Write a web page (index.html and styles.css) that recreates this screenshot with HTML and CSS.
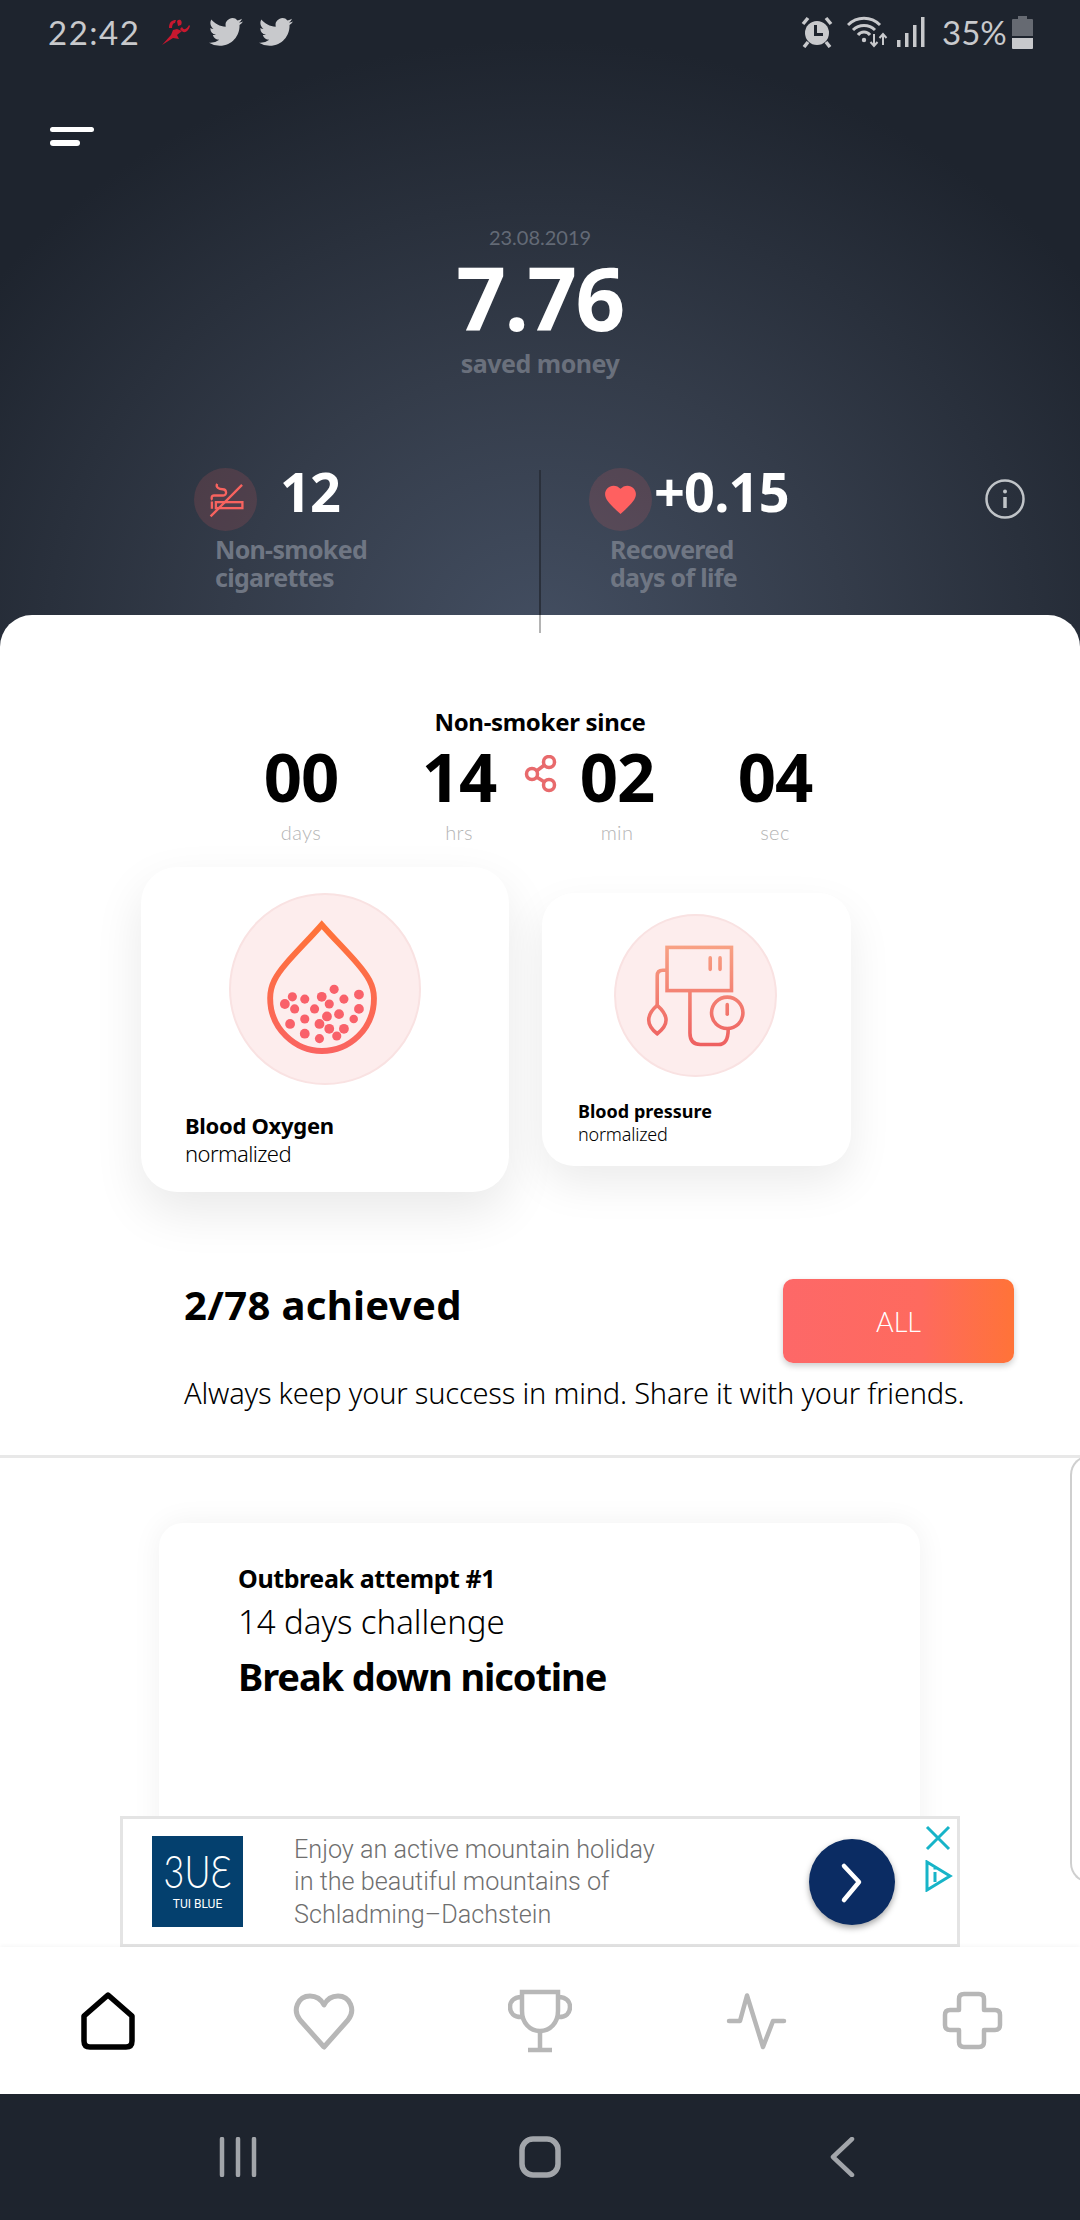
FILE: index.html
```html
<!DOCTYPE html>
<html lang="en"><head>
	<meta charset="UTF-8">
	<title>Non-smoker</title>
	<link rel="stylesheet" href="styles.css">
</head>
<body>
	<div class="main">
		<div class="hero">
			<div class="status-bar">
				<div class="status-group">
					<span class="status-time">22:42</span>
					<svg class="status-runner" viewBox="0 0 28 28" fill="#c8182f">
						<path d="M0 27 L9 17 L11 12 L15 11 L20 13 L15 17 L17 21 L11 20 Z"/>
						<path d="M7 10 C7 4 10 2 14 2 L13 5 C11 5 10 7 10 10 Z"/>
						<path d="M15 3 C18 0 21 3 19 7 L16 8 Z"/>
						<path d="M20 9 C22 13 25 11 27 7 L28 8 C26 15 21 16 18 11 Z"/>
					</svg>
					<svg class="status-bird" viewBox="0 0 24 24"><path d="M23.953 4.57a10 10 0 01-2.825.775 4.958 4.958 0 002.163-2.723c-.951.555-2.005.959-3.127 1.184a4.92 4.92 0 00-8.384 4.482C7.69 8.095 4.067 6.13 1.64 3.162a4.822 4.822 0 00-.666 2.475c0 1.71.87 3.213 2.188 4.096a4.904 4.904 0 01-2.228-.616v.06a4.923 4.923 0 003.946 4.827 4.996 4.996 0 01-2.212.085 4.936 4.936 0 004.604 3.417 9.867 9.867 0 01-6.102 2.105c-.39 0-.779-.023-1.17-.067a13.995 13.995 0 007.557 2.209c9.053 0 13.998-7.496 13.998-13.985 0-.21 0-.42-.015-.63A9.935 9.935 0 0024 4.59z"/></svg>
					<svg class="status-bird" viewBox="0 0 24 24"><path d="M23.953 4.57a10 10 0 01-2.825.775 4.958 4.958 0 002.163-2.723c-.951.555-2.005.959-3.127 1.184a4.92 4.92 0 00-8.384 4.482C7.69 8.095 4.067 6.13 1.64 3.162a4.822 4.822 0 00-.666 2.475c0 1.71.87 3.213 2.188 4.096a4.904 4.904 0 01-2.228-.616v.06a4.923 4.923 0 003.946 4.827 4.996 4.996 0 01-2.212.085 4.936 4.936 0 004.604 3.417 9.867 9.867 0 01-6.102 2.105c-.39 0-.779-.023-1.17-.067a13.995 13.995 0 007.557 2.209c9.053 0 13.998-7.496 13.998-13.985 0-.21 0-.42-.015-.63A9.935 9.935 0 0024 4.59z"/></svg>
				</div>
				<div class="status-group status-right">
					<svg class="status-alarm" viewBox="0 0 32 32">
						<circle cx="16" cy="17" r="12" fill="#c8c9cc"/>
						<path d="M14.5 9 V18.5 H22" fill="none" stroke="#1e242e" stroke-width="3"/>
						<path d="M2 8 L7 2 M30 8 L25 2 M7 26 L3 31 M25 26 L29 31" stroke="#c8c9cc" stroke-width="3.5" fill="none"/>
					</svg>
					<svg class="status-wifi" viewBox="0 0 41 32" fill="none" stroke="#c8c9cc">
						<path d="M1 9 C10 0 24 0 33 9" stroke-width="3"/>
						<path d="M6 14 C12 8 22 8 28 14" stroke-width="3"/>
						<path d="M11 19 C14 15 20 15 23 19" stroke-width="3"/>
						<circle cx="17" cy="24" r="2.2" fill="#c8c9cc" stroke="none"/>
						<path d="M27 18 V30 M23.5 26 L27 30 L30.5 26 M36 29 V19 M32.5 22 L36 18 L39.5 22" stroke-width="2"/>
					</svg>
					<svg class="status-signal" viewBox="0 0 28 30" fill="#c8c9cc">
						<rect x="0" y="23" width="3.5" height="7"/>
						<rect x="8" y="16" width="3.5" height="14"/>
						<rect x="16" y="8" width="3.5" height="22"/>
						<rect x="24" y="0" width="3.5" height="30"/>
					</svg>
					<span class="status-battery-text">35%</span>
					<svg class="status-battery" viewBox="0 0 21 33">
						<path d="M6 0 H15 V3 H20 Q21 3 21 4 V20 H0 V4 Q0 3 1 3 H6 Z" fill="#666a72"/>
						<path d="M0 22 H21 V32 Q21 33 20 33 H1 Q0 33 0 32 Z" fill="#c8c9cc"/>
					</svg>
				</div>
			</div>
			<div class="menu-icon"><span></span><span></span></div>
			<div class="summary">
				<div class="summary-date">23.08.2019</div>
				<div class="summary-value">7.76</div>
				<div class="summary-label">saved money</div>
			</div>
			<div class="stats">
				<div class="stat">
					<div class="stat-top">
						<div class="stat-badge">
							<svg viewBox="42 54 190 190" fill="none" stroke="#f8635f" stroke-width="7">
								<path d="M187 105 L92 200"/>
								<rect x="108" y="157" width="80" height="18"/>
								<path d="M96 155 V177"/>
								<path d="M112 102 C106 112 118 118 128 118 C142 118 142 137 130 137 L102 137 C94 137 94 147 97 150"/>
							</svg>
						</div>
						<span class="stat-value stat-value-gap">12</span>
					</div>
					<div class="stat-label">Non-smoked<br>cigarettes</div>
				</div>
				<div class="stat stat-second">
					<div class="stat-top">
						<div class="stat-badge">
							<svg class="stat-heart" viewBox="0 0 24 24" fill="#ff6060"><path d="M12 21.35l-1.45-1.32C5.4 15.36 2 12.28 2 8.5 2 5.42 4.42 3 7.5 3c1.74 0 3.41.81 4.5 2.09C13.09 3.81 14.76 3 16.5 3 19.58 3 22 5.42 22 8.5c0 3.78-3.4 6.86-8.55 11.54L12 21.35z"/></svg>
						</div>
						<span class="stat-value">+0.15</span>
					</div>
					<div class="stat-label">Recovered<br>days of life</div>
				</div>
				<svg class="info-icon" viewBox="0 0 40 40" fill="none" stroke="#c0c4c8">
					<circle cx="20" cy="20" r="18.5" stroke-width="2.5"/>
					<circle cx="20" cy="12.5" r="2" fill="#c0c4c8" stroke="none"/>
					<path d="M20 18 V29" stroke-width="3.5"/>
				</svg>
			</div>
		</div>

		<div class="sheet">
			<div class="split-line"></div>
			<div class="since-title">Non-smoker since</div>
			<div class="timer">
				<div class="timer-cell"><div class="timer-value">00</div><div class="timer-label">days</div></div>
				<div class="timer-cell"><div class="timer-value">14</div><div class="timer-label">hrs</div></div>
				<div class="timer-cell"><div class="timer-value">02</div><div class="timer-label">min</div></div>
				<div class="timer-cell"><div class="timer-value">04</div><div class="timer-label">sec</div></div>
				<svg class="share-icon" viewBox="0 0 34 38" fill="none" stroke="#e86a6c" stroke-width="3.5">
					<circle cx="26" cy="7" r="5.5"/>
					<circle cx="9" cy="19" r="5.5"/>
					<circle cx="26" cy="30" r="5.5"/>
					<path d="M21.5 10 L13.5 16 M13.5 22 L21.5 27"/>
				</svg>
			</div>

			<div class="vitals">
				<div class="vital-card vital-large">
					<div class="vital-badge">
						<svg viewBox="27 39 576 576">
							<defs>
								<linearGradient id="drop-grad" x1="0" y1="0" x2="0" y2="1">
									<stop offset="0" stop-color="#ff7338"/>
									<stop offset="1" stop-color="#fa6460"/>
								</linearGradient>
							</defs>
							<path d="M305 130 C270 170 225 215 195 250 C165 285 147 315 147 355 C147 450 225 517 305 517 C390 517 465 450 465 355 C465 315 445 285 415 250 C385 215 340 170 305 130 Z" fill="none" stroke="url(#drop-grad)" stroke-width="18"/>
							<g fill="#f9616a">
								<circle cx="343" cy="328" r="14"/><circle cx="419" cy="344" r="15"/><circle cx="215" cy="351" r="14"/>
								<circle cx="253" cy="358" r="14"/><circle cx="305" cy="351" r="15"/><circle cx="373" cy="358" r="14"/>
								<circle cx="192" cy="373" r="15"/><circle cx="328" cy="373" r="14"/><circle cx="222" cy="388" r="14"/>
								<circle cx="283" cy="388" r="14"/><circle cx="419" cy="388" r="15"/><circle cx="253" cy="419" r="14"/>
								<circle cx="321" cy="411" r="15"/><circle cx="358" cy="404" r="15"/><circle cx="403" cy="419" r="13"/>
								<circle cx="208" cy="434" r="15"/><circle cx="298" cy="434" r="15"/><circle cx="328" cy="449" r="15"/>
								<circle cx="373" cy="449" r="15"/><circle cx="253" cy="464" r="15"/><circle cx="351" cy="471" r="14"/>
								<circle cx="298" cy="479" r="14"/>
							</g>
						</svg>
					</div>
					<div class="vital-name">Blood Oxygen</div>
					<div class="vital-state">normalized</div>
				</div>
				<div class="vital-card vital-small">
					<div class="vital-badge">
						<svg viewBox="12 12 486 486" fill="none" stroke="url(#bp-grad)" stroke-width="11">
							<defs>
								<linearGradient id="bp-grad" gradientUnits="userSpaceOnUse" x1="0" y1="105" x2="0" y2="410">
									<stop offset="0" stop-color="#f8a184"/>
									<stop offset="1" stop-color="#ee5f60"/>
								</linearGradient>
							</defs>
							<rect x="168" y="108" width="197" height="132"/>
							<path d="M300 140 V175 M330 140 V175" stroke-linecap="round"/>
							<path d="M168 178 H155 Q138 178 138 195 V285"/>
							<path d="M138 285 C120 300 112 315 112 330 C112 345 125 362 138 372 C151 362 165 345 165 330 C165 315 155 300 138 285 Z"/>
							<path d="M238 240 V370 Q238 405 270 405 H325 Q355 405 355 358"/>
							<circle cx="352" cy="308" r="48"/>
							<path d="M352 283 V312" stroke-linecap="round"/>
						</svg>
					</div>
					<div class="vital-name">Blood pressure</div>
					<div class="vital-state">normalized</div>
				</div>
			</div>

			<div class="achieved">
				<div class="achieved-title">2/78 achieved</div>
				<div class="all-btn">ALL</div>
			</div>
			<div class="achieved-text">Always keep your success in mind. Share it with your friends.</div>
			<div class="rule"></div>

			<div class="challenges">
				<div class="challenge-card">
					<div class="challenge-kicker">Outbreak attempt #1</div>
					<div class="challenge-sub">14 days challenge</div>
					<div class="challenge-title">Break down nicotine</div>
				</div>
				<div class="challenge-peek"></div>
			</div>
		</div>

		<div class="ad">
			<div class="ad-logo">
				<span class="ad-logo-mark">3UƐ</span>
				<span class="ad-logo-name">TUI BLUE</span>
			</div>
			<div class="ad-text">Enjoy an active mountain holiday<br>in the beautiful mountains of<br>Schladming–Dachstein</div>
			<div class="ad-cta">
				<svg viewBox="0 0 86 86" fill="none" stroke="#fff" stroke-width="4.5" stroke-linecap="round" stroke-linejoin="round"><path d="M35 27 L50 43 L35 61"/></svg>
			</div>
			<div class="ad-marks">
				<svg viewBox="0 0 26 26" fill="none" stroke="#17b4c8" stroke-width="3"><path d="M2 2 L24 24 M24 2 L2 24"/></svg>
				<svg viewBox="0 0 30 32" fill="none" stroke="#17b4c8" stroke-width="3"><path d="M4 2 L27 16 L4 30 Z"/><path d="M12 12 V22 M12 8 V9.5"/></svg>
			</div>
		</div>
	</div>

	<div class="bottom-nav">
		<svg viewBox="0 0 64 64" fill="none" stroke="#000" stroke-width="5.5" stroke-linejoin="round"><path d="M32 6 L8 27 V52 Q8 58 14 58 H50 Q56 58 56 52 V27 Z"/></svg>
		<svg viewBox="0 0 64 64" fill="none" stroke="#b7b7b7" stroke-width="5" stroke-linejoin="round"><path d="M32 58 L8 31 C0 21 6 7 18 7 C24 7 29 10 32 16 C35 10 40 7 46 7 C58 7 64 21 56 31 Z"/></svg>
		<svg viewBox="0 0 64 64" fill="none" stroke="#b7b7b7" stroke-width="4.5"><path d="M14 3 H50 V22 C50 34 42 42 32 42 C22 42 14 34 14 22 Z"/><path d="M14 8 C4 8 2 14 2 18 C2 24 6 28 13 28 M50 8 C60 8 62 14 62 18 C62 24 58 28 51 28"/><path d="M32 42 V60 M20 61 H44"/></svg>
		<svg viewBox="0 0 64 64" fill="none" stroke="#b7b7b7" stroke-width="4.5" stroke-linecap="round" stroke-linejoin="round"><path d="M5 32 H16 L23 6.5 L39 58 L49 32 H60"/></svg>
		<svg viewBox="0 0 64 64" fill="none" stroke="#b7b7b7" stroke-width="4.5" stroke-linejoin="round"><path d="M24 5 H39 Q44 5 44 10 V21 H55 Q60 21 60 26 V36 Q60 41 55 41 H44 V53 Q44 58 39 58 H24 Q19 58 19 53 V41 H10 Q5 41 5 36 V26 Q5 21 10 21 H19 V10 Q19 5 24 5 Z"/></svg>
	</div>

	<div class="system-nav">
		<div class="system-item">
			<svg class="system-recents" viewBox="0 0 38 40" fill="none" stroke="#a2a5aa" stroke-width="4.5" stroke-linecap="round"><path d="M3 2 V38 M19 2 V38 M35 2 V38"/></svg>
		</div>
		<div class="system-item">
			<svg class="system-home" viewBox="0 0 42 42"><rect x="3" y="3" width="36" height="36" rx="11" fill="none" stroke="#a2a5aa" stroke-width="5.5"/></svg>
		</div>
		<div class="system-item">
			<svg class="system-back" viewBox="0 0 25 40" fill="none" stroke="#a2a5aa" stroke-width="4.5" stroke-linecap="round" stroke-linejoin="round"><path d="M22 2 L3 20 L22 38"/></svg>
		</div>
	</div>
</body></html>
```

FILE: styles.css
```css
html, body {
	margin: 0;
	padding: 0;
}

body {
	width: 1080px;
	height: 2220px;
	overflow: hidden;
	display: flex;
	flex-direction: column;
	background: #fff;
	font-family: 'Noto Sans', sans-serif;
	color: #000;
}

.main {
	position: relative;
	flex: 1;
	min-height: 0;
	overflow: hidden;
}

/* top dark part */
.hero {
	height: 660px;
	display: flex;
	flex-direction: column;
	background: radial-gradient(ellipse 680px 600px at 540px 640px, #434e61 0%, #343c4a 45%, #1e242e 100%);
}

.status-bar {
	height: 64px;
	flex: none;
	display: flex;
	justify-content: space-between;
	align-items: center;
	padding: 0 47px 0 48px;
	color: #c8c9cc;
}
.status-group {
	display: flex;
	align-items: center;
}
.status-time {
	width: 91px;
	font-family: 'Lato', sans-serif;
	font-size: 33px;
	line-height: 34px;
	letter-spacing: 1.5px;
	white-space: nowrap;
}
.status-runner {
	width: 28px;
	height: 28px;
	margin-left: 23px;
}
.status-bird {
	width: 34px;
	height: 34px;
	margin-left: 19px;
	fill: #c8c9cc;
}
.status-bird + .status-bird {
	margin-left: 16px;
}
.status-alarm {
	width: 32px;
	height: 32px;
}
.status-wifi {
	width: 41px;
	height: 32px;
	margin-left: 14px;
}
.status-signal {
	width: 28px;
	height: 30px;
	margin-left: 9px;
}
.status-battery-text {
	width: 61px;
	margin-left: 17px;
	font-family: 'Lato', sans-serif;
	font-size: 33px;
	line-height: 34px;
	white-space: nowrap;
}
.status-battery {
	width: 21px;
	height: 33px;
	margin-left: 9px;
}

.menu-icon {
	display: flex;
	flex-direction: column;
	align-items: flex-start;
	gap: 8px;
	margin: 63px 0 0 50px;
}
.menu-icon span {
	display: block;
	width: 44px;
	height: 5px;
	border-radius: 3px;
	background: #fff;
}
.menu-icon span + span {
	width: 30px;
	height: 6px;
}

.summary {
	display: flex;
	flex-direction: column;
	align-items: center;
	margin-top: 79px;
}
.summary-date {
	font-family: 'Lato', sans-serif;
	font-size: 20px;
	line-height: 24px;
	color: #636a76;
}
.summary-value {
	margin-top: 3px;
	font-size: 87px;
	font-weight: 700;
	line-height: 90px;
	letter-spacing: -1.5px;
	color: #fff;
}
.summary-label {
	margin-top: 6px;
	font-size: 25px;
	font-weight: 700;
	line-height: 30px;
	letter-spacing: -0.5px;
	color: #6a707c;
}

.stats {
	display: flex;
	align-items: flex-start;
	margin-top: 90px;
	padding: 0 55px 0 194px;
}
.stat {
	width: 395px;
	flex: none;
}
.stat-second {
	width: 300px;
}
.stat-top {
	display: flex;
	align-items: flex-start;
}
.stat-badge {
	width: 63px;
	height: 63px;
	flex: none;
	display: flex;
	align-items: center;
	justify-content: center;
	border-radius: 50%;
	background: rgba(255, 96, 96, 0.14);
}
.stat-badge svg {
	width: 63px;
	height: 63px;
}
.stat-badge .stat-heart {
	width: 37px;
	height: 37px;
}
.stat-value {
	margin: -8px 0 0 2px;
	font-size: 54px;
	font-weight: 700;
	line-height: 63px;
	letter-spacing: -0.8px;
	color: #fff;
}
.stat-value-gap {
	margin-left: 23px;
}
.stat-label {
	margin: 4px 0 0 21px;
	font-size: 25px;
	font-weight: 700;
	line-height: 28px;
	letter-spacing: -0.7px;
	color: #6f7683;
}
.info-icon {
	width: 40px;
	height: 40px;
	margin: 11px 0 0 auto;
}

/* white sheet */
.sheet {
	position: relative;
	margin-top: -45px;
	height: 1400px;
	padding-top: 92px;
	box-sizing: border-box;
	background: #fff;
	border-radius: 32px 32px 0 0;
}
.split-line {
	position: absolute;
	left: 539px;
	top: -145px;
	width: 2px;
	height: 163px;
	background: linear-gradient(to bottom, #2a303b 0, #2a303b 145px, #b4b4b4 145px);
}
.since-title {
	font-size: 24px;
	font-weight: 700;
	line-height: 30px;
	letter-spacing: -0.3px;
	text-align: center;
}
.timer {
	position: relative;
	display: flex;
	margin-top: 4px;
	padding-left: 222px;
}
.timer-cell {
	width: 158px;
	text-align: center;
}
.timer-value {
	font-size: 67px;
	font-weight: 700;
	line-height: 70px;
	letter-spacing: -1px;
}
.timer-label {
	margin-top: 8px;
	font-family: 'Lato', sans-serif;
	font-size: 20px;
	font-weight: 300;
	line-height: 26px;
	letter-spacing: 0.4px;
	color: #b4b4b4;
}
.share-icon {
	position: absolute;
	left: 523px;
	top: 14px;
	width: 34px;
	height: 38px;
}

.vitals {
	display: flex;
	align-items: flex-start;
	gap: 33px;
	margin: 22px 0 0 141px;
}
.vital-card {
	box-sizing: border-box;
	background: #fff;
}
.vital-large {
	width: 368px;
	height: 325px;
	padding: 26px 0 0 44px;
	border-radius: 36px;
	box-shadow: 0 20px 50px rgba(0, 0, 0, 0.09);
}
.vital-small {
	width: 309px;
	height: 273px;
	margin-top: 26px;
	padding: 21px 0 0 36px;
	border-radius: 32px;
	box-shadow: 0 18px 44px rgba(0, 0, 0, 0.08);
}
.vital-badge {
	box-sizing: border-box;
	border: 2px solid #f9e2e2;
	border-radius: 50%;
	background: #fdeded;
}
.vital-badge svg {
	display: block;
	width: 100%;
	height: 100%;
}
.vital-large .vital-badge {
	width: 192px;
	height: 192px;
	margin-left: 44px;
}
.vital-small .vital-badge {
	width: 163px;
	height: 163px;
	margin-left: 36px;
}
.vital-name {
	font-weight: 700;
}
.vital-state {
	font-weight: 300;
}
.vital-large .vital-name {
	margin-top: 26px;
	font-size: 22px;
	line-height: 28px;
	letter-spacing: -0.3px;
}
.vital-large .vital-state {
	font-size: 22px;
	line-height: 28px;
	letter-spacing: -0.6px;
}
.vital-small .vital-name {
	margin-top: 22px;
	font-size: 18px;
	line-height: 24px;
	letter-spacing: 0;
}
.vital-small .vital-state {
	font-size: 18px;
	line-height: 23px;
	letter-spacing: -0.2px;
}

.achieved {
	display: flex;
	justify-content: space-between;
	align-items: flex-start;
	margin-top: 87px;
	padding: 0 66px 0 184px;
}
.achieved-title {
	margin-top: 1px;
	font-size: 40px;
	font-weight: 700;
	line-height: 50px;
	letter-spacing: 0.35px;
}
.all-btn {
	width: 231px;
	height: 84px;
	display: flex;
	align-items: center;
	justify-content: center;
	border-radius: 10px;
	background: linear-gradient(to right, #fd6868 0%, #fe6a5e 60%, #ff7338 100%);
	box-shadow: 0 3px 6px rgba(0, 0, 0, 0.2);
	font-family: 'Lato', sans-serif;
	font-size: 27px;
	font-weight: 300;
	color: #fff;
}
.achieved-text {
	margin: 10px 0 0 184px;
	font-size: 29px;
	font-weight: 300;
	line-height: 40px;
	letter-spacing: -0.2px;
	white-space: nowrap;
}
.rule {
	height: 3px;
	margin-top: 42px;
	background: #e8e8e8;
}

.challenges {
	display: flex;
	align-items: flex-start;
	padding-left: 159px;
}
.challenge-card {
	box-sizing: border-box;
	width: 761px;
	height: 500px;
	flex: none;
	margin-top: 65px;
	padding: 39px 0 0 79px;
	border-radius: 24px;
	box-shadow: 0 0 30px rgba(0, 0, 0, 0.06);
}
.challenge-kicker {
	font-size: 25px;
	font-weight: 700;
	line-height: 32px;
	letter-spacing: -0.4px;
}
.challenge-sub {
	margin-top: 6px;
	font-size: 33px;
	font-weight: 300;
	line-height: 44px;
	letter-spacing: -0.05px;
}
.challenge-title {
	margin-top: 7px;
	font-size: 38px;
	font-weight: 700;
	line-height: 50px;
	letter-spacing: -1.1px;
}
.challenge-peek {
	box-sizing: border-box;
	width: 40px;
	height: 428px;
	flex: none;
	margin: -3px 0 0 150px;
	border: 2px solid #cfcfcf;
	border-right: none;
	border-radius: 20px 0 0 20px;
}

/* ad banner sits over the list */
.ad {
	position: absolute;
	left: 120px;
	bottom: 0;
	box-sizing: border-box;
	width: 840px;
	height: 131px;
	display: flex;
	align-items: center;
	border: 3px solid #e4e4e4;
	background: #fff;
}
.ad-logo {
	width: 91px;
	height: 91px;
	flex: none;
	display: flex;
	flex-direction: column;
	align-items: center;
	margin-left: 29px;
	background: #04406e;
	color: #fff;
}
.ad-logo-mark {
	margin-top: 12px;
	font-family: 'Lato', sans-serif;
	font-size: 46px;
	font-weight: 300;
	line-height: 46px;
	transform: scaleX(0.78);
}
.ad-logo-name {
	margin-top: 3px;
	font-family: 'Roboto', sans-serif;
	font-size: 12px;
	line-height: 14px;
}
.ad-text {
	margin: 2px 0 0 51px;
	font-family: 'Roboto', sans-serif;
	font-size: 25.2px;
	font-weight: 300;
	line-height: 32.5px;
	color: #6f6f6f;
	white-space: nowrap;
}
.ad-cta {
	width: 86px;
	height: 86px;
	flex: none;
	margin-left: auto;
	border-radius: 50%;
	background: #0b2c63;
	box-shadow: 0 3px 6px rgba(0, 0, 0, 0.35);
}
.ad-cta svg {
	display: block;
}
.ad-marks {
	display: flex;
	flex-direction: column;
	align-items: center;
	gap: 9px;
	margin: 0 0 46px 28px;
	padding-right: 4px;
}
.ad-marks svg {
	display: block;
	width: 30px;
	height: 26px;
}
.ad-marks svg + svg {
	height: 32px;
}

.bottom-nav {
	height: 147px;
	flex: none;
	display: flex;
	justify-content: space-around;
	align-items: center;
	background: #fff;
	box-shadow: 0 -2px 4px rgba(0, 0, 0, 0.03);
	position: relative;
}
.bottom-nav svg {
	width: 64px;
	height: 64px;
}

.system-nav {
	height: 126px;
	flex: none;
	display: flex;
	justify-content: center;
	align-items: center;
	background: #1e242e;
}
.system-item {
	width: 302px;
	display: flex;
	justify-content: center;
	align-items: center;
}
.system-recents {
	width: 38px;
	height: 40px;
}
.system-home {
	width: 42px;
	height: 42px;
}
.system-back {
	width: 25px;
	height: 40px;
}
```
